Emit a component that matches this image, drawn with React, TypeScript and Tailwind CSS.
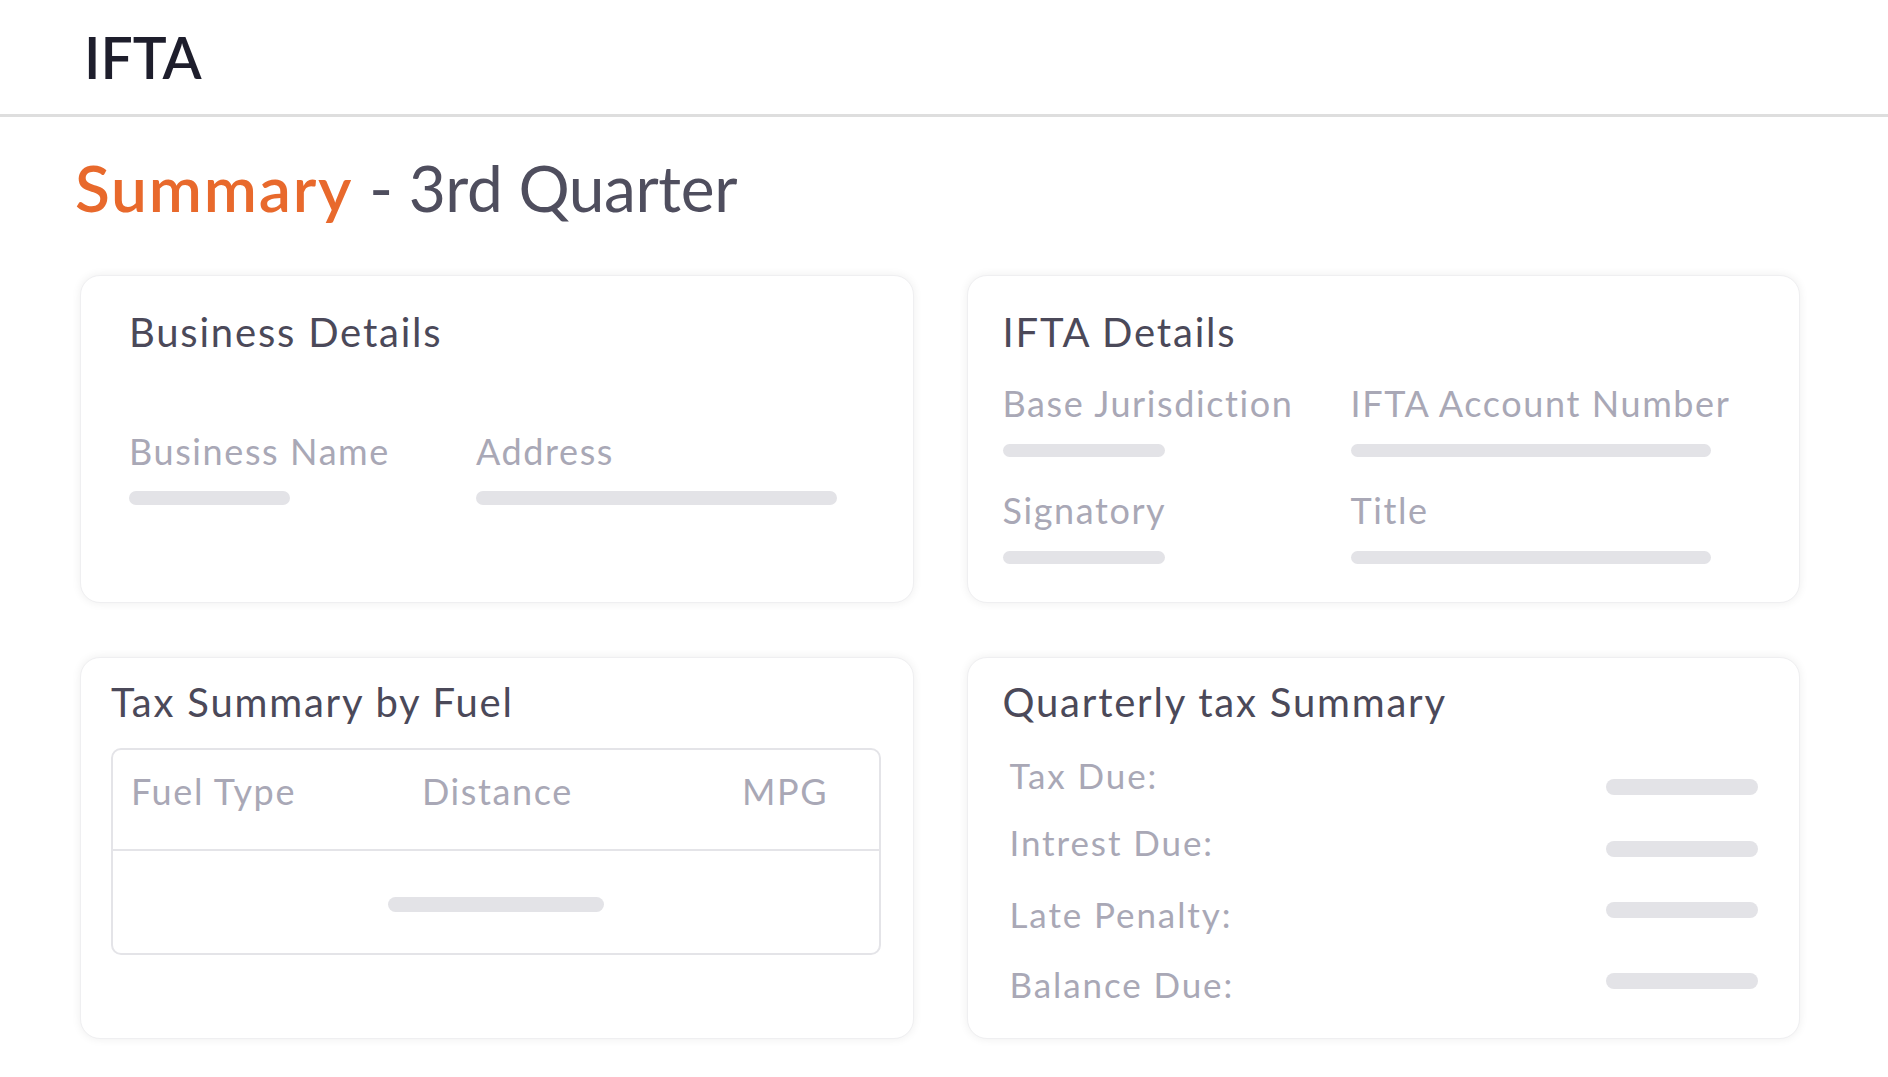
const FONT = "font-['Lato','Noto_Sans',sans-serif]";

function Bar({ className }: { className: string }) {
  return <div className={`rounded-full bg-[#e3e3e7] ${className}`} />;
}

function Card({ className, children }: { className?: string; children: React.ReactNode }) {
  return (
    <div
      className={`rounded-[20px] border border-[#efeff1] bg-white shadow-[0_0_10px_rgba(0,0,0,0.07)] ${className ?? ""}`}
    >
      {children}
    </div>
  );
}

function Title({ children }: { children: React.ReactNode }) {
  return <h2 className="text-[40px] leading-none tracking-[1.8px] text-[#4b4959]">{children}</h2>;
}

function Label({ children }: { children: React.ReactNode }) {
  return <div className="text-[36px] leading-none tracking-[1.6px] text-[#a9a8b6]">{children}</div>;
}

const quarterly = [
  { label: "Tax Due:", row: "mt-[36px]", bar: "mt-[21px]" },
  { label: "Intrest Due:", row: "mt-[30px]", bar: "mt-[16px]" },
  { label: "Late Penalty:", row: "mt-[37px]", bar: "mt-[5px]" },
  { label: "Balance Due:", row: "mt-[35px]", bar: "mt-[6px]" },
];

export default function App() {
  return (
    <div className={`min-h-screen bg-white ${FONT}`}>
      <header className="flex h-[117px] items-center border-b-[3px] border-[#dedede] pl-[84px]">
        <span className="text-[57px] font-semibold leading-none text-[#1e1e2c]">IFTA</span>
      </header>

      <main className="px-[80px]">
        <h1 className="-ml-[5px] mt-[39px] text-[64px] leading-none text-[#4f4e5e]">
          <span className="font-semibold tracking-[1.8px] text-[#e8692c]">Summary</span>
          <span className="tracking-[-0.4px]"> - 3rd Quarter</span>
        </h1>

        <div className="mt-[55px] grid w-[1720px] grid-cols-2 gap-x-[53px] gap-y-[54px]">
          {/* Business Details */}
          <Card className="h-[328px] pl-[48px] pt-[36px]">
            <Title>Business Details</Title>
            <div className="mt-[81px] flex">
              <div className="w-[347px]">
                <Label>Business Name</Label>
                <Bar className="mt-[22px] h-[14px] w-[161px]" />
              </div>
              <div>
                <Label>Address</Label>
                <Bar className="mt-[22px] h-[14px] w-[361px]" />
              </div>
            </div>
          </Card>

          {/* IFTA Details */}
          <Card className="h-[328px] pl-[35px] pt-[36px]">
            <Title>IFTA Details</Title>
            <div className="mt-[33px] grid grid-cols-[348px_1fr] gap-y-[35px]">
              <div>
                <Label>Base Jurisdiction</Label>
                <Bar className="mt-[23px] h-[13px] w-[162px]" />
              </div>
              <div>
                <Label>IFTA Account Number</Label>
                <Bar className="mt-[23px] h-[13px] w-[360px]" />
              </div>
              <div>
                <Label>Signatory</Label>
                <Bar className="mt-[23px] h-[13px] w-[162px]" />
              </div>
              <div>
                <Label>Title</Label>
                <Bar className="mt-[23px] h-[13px] w-[360px]" />
              </div>
            </div>
          </Card>

          {/* Tax Summary by Fuel */}
          <Card className="h-[382px] px-[30px] pt-[24px]">
            <Title>Tax Summary by Fuel</Title>
            <div className="mt-[26px] h-[207px] w-[770px] rounded-[10px] border-2 border-[#e4e4e8]">
              <div className="flex h-[101px] border-b-2 border-[#e4e4e8] pl-[18px] pt-[23px]">
                <div className="w-[291px]">
                  <Label>Fuel Type</Label>
                </div>
                <div className="w-[320px]">
                  <Label>Distance</Label>
                </div>
                <Label>MPG</Label>
              </div>
              <div className="flex h-[102px] items-center justify-center">
                <Bar className="mt-[4px] h-[15px] w-[216px]" />
              </div>
            </div>
          </Card>

          {/* Quarterly tax Summary */}
          <Card className="h-[382px] pl-[35px] pr-[41px] pt-[24px]">
            <Title>Quarterly tax Summary</Title>
            <div className="pl-[7px]">
              {quarterly.map((q) => (
                <div key={q.label} className={`flex items-start justify-between ${q.row}`}>
                  <div className="text-[35px] leading-none tracking-[1.9px] text-[#a9a8b6]">{q.label}</div>
                  <Bar className={`h-[16px] w-[152px] ${q.bar}`} />
                </div>
              ))}
            </div>
          </Card>
        </div>
      </main>
    </div>
  );
}
